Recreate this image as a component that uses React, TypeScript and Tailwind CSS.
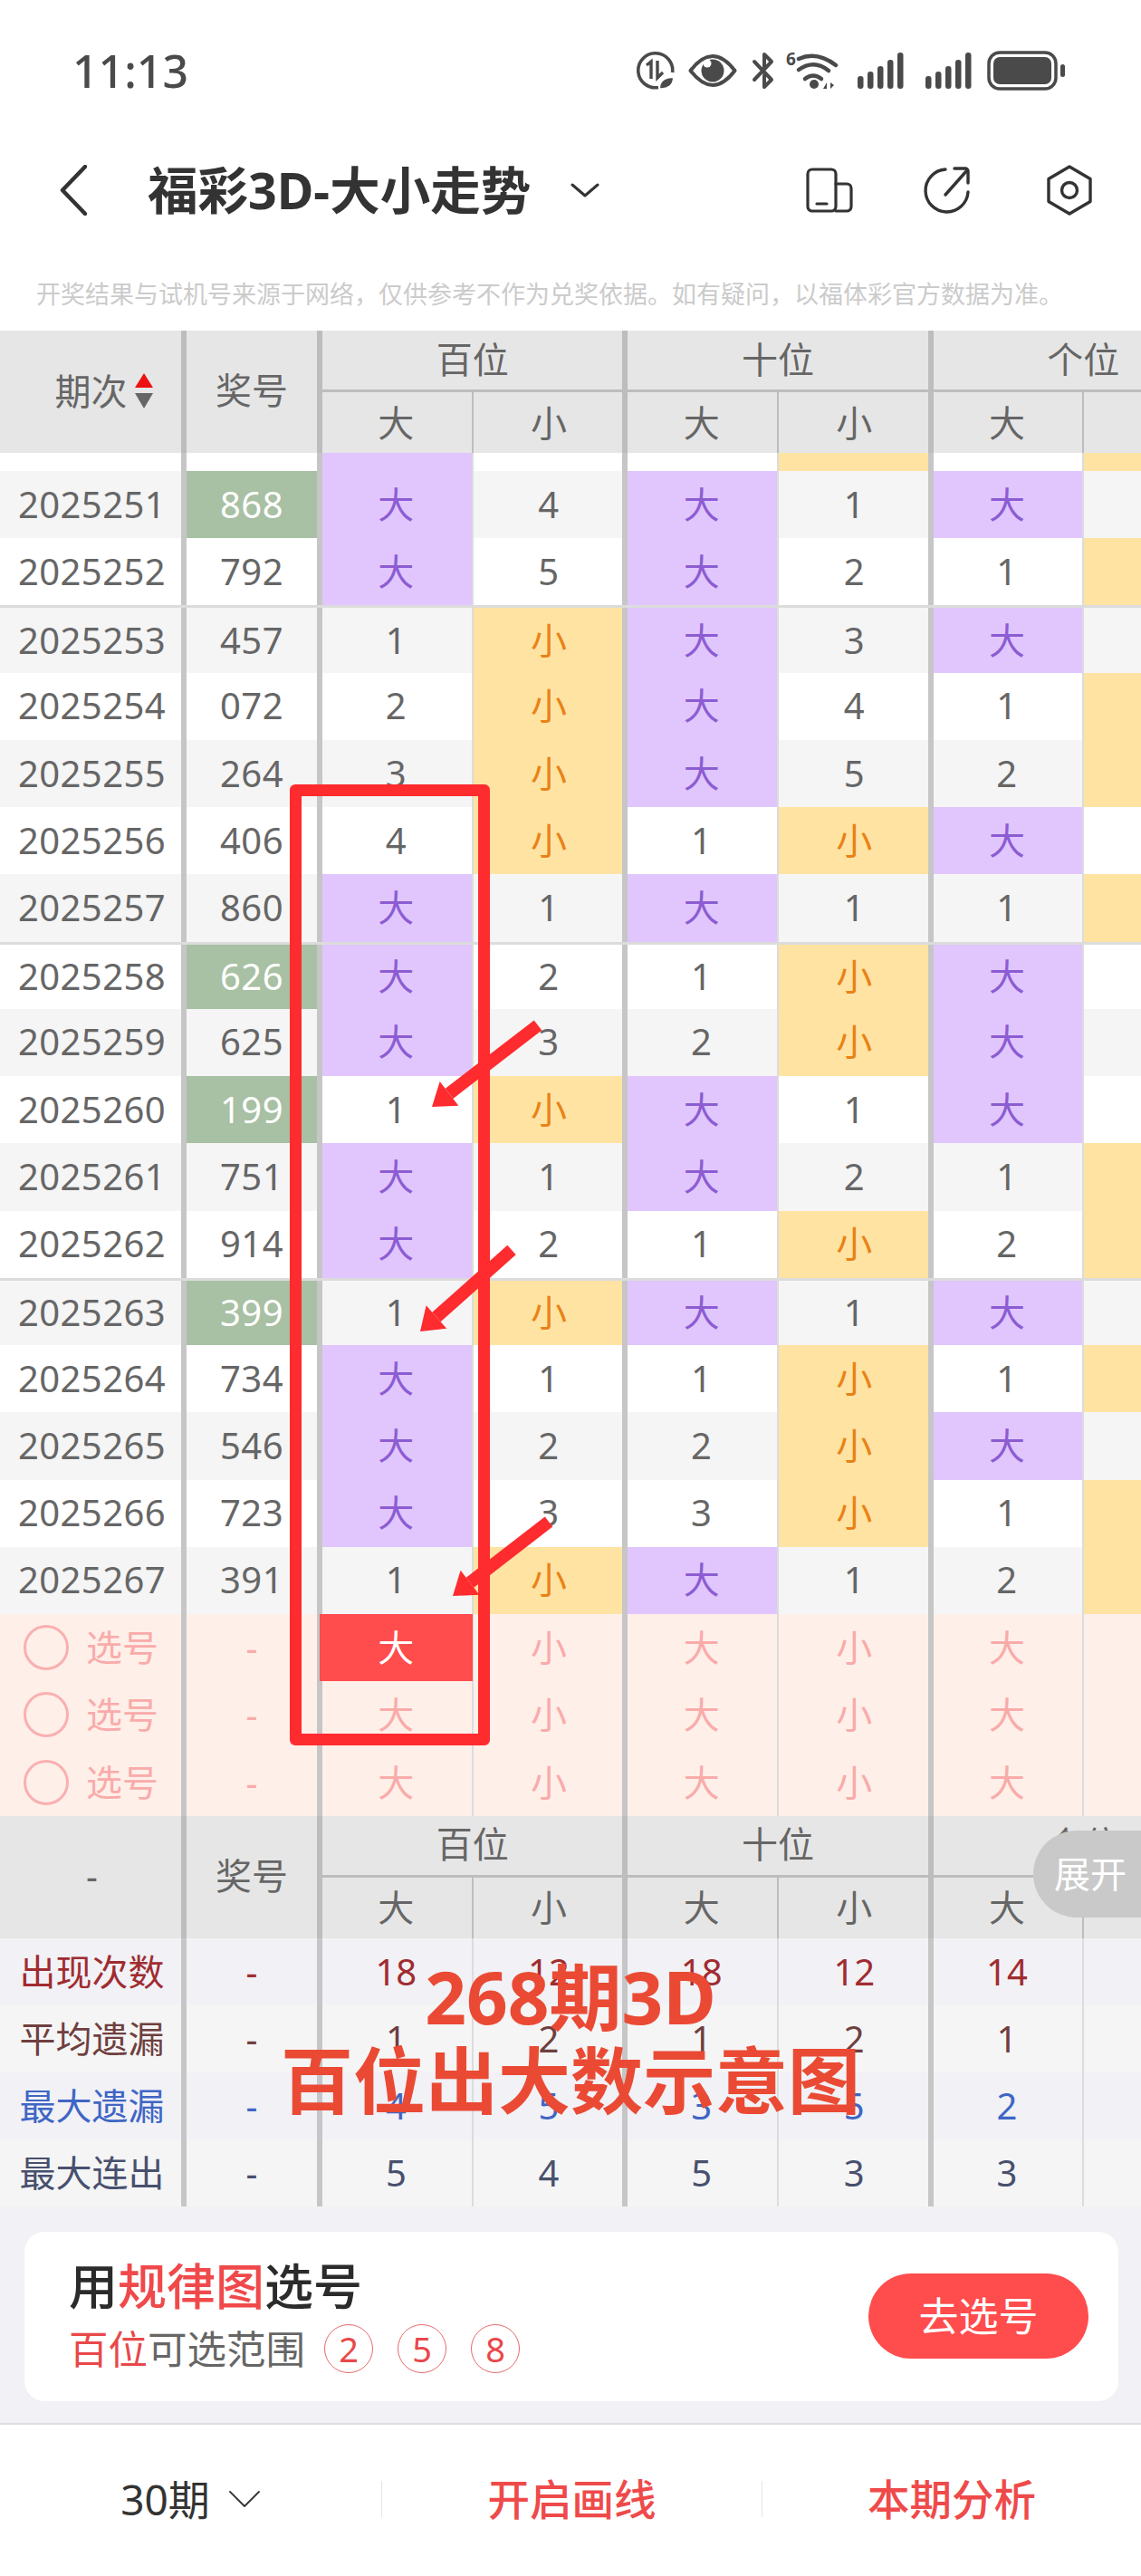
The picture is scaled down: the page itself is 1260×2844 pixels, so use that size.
import React from 'react'

const GRID = 'grid grid-cols-[203px_150px_repeat(6,168.67px)]'

// shadows keep the text centred on the cell while drawing the column rules
const BODY_RULES = [
  'shadow-[inset_-3px_0_0_#c6c6c6]',
  'shadow-[inset_3px_0_0_#c6c6c6,inset_-3px_0_0_#c6c6c6]',
  'shadow-[inset_3px_0_0_#c6c6c6,inset_-1px_0_0_#dcdcdc]',
  'shadow-[inset_1px_0_0_#dcdcdc,inset_-3px_0_0_#c6c6c6]',
  'shadow-[inset_3px_0_0_#c6c6c6,inset_-1px_0_0_#dcdcdc]',
  'shadow-[inset_1px_0_0_#dcdcdc,inset_-3px_0_0_#c6c6c6]',
  'shadow-[inset_3px_0_0_#c6c6c6,inset_-1px_0_0_#dcdcdc]',
  'shadow-[inset_1px_0_0_#dcdcdc,inset_-3px_0_0_#c6c6c6]',
]

const rows: [string, string, boolean, string[]][] = [
  ['2025251', '868', true, ['大', '4', '大', '1', '大', '1']],
  ['2025252', '792', false, ['大', '5', '大', '2', '1', '小']],
  ['2025253', '457', false, ['1', '小', '大', '3', '大', '1']],
  ['2025254', '072', false, ['2', '小', '大', '4', '1', '小']],
  ['2025255', '264', false, ['3', '小', '大', '5', '2', '小']],
  ['2025256', '406', false, ['4', '小', '1', '小', '大', '1']],
  ['2025257', '860', false, ['大', '1', '大', '1', '1', '小']],
  ['2025258', '626', true, ['大', '2', '1', '小', '大', '1']],
  ['2025259', '625', false, ['大', '3', '2', '小', '大', '2']],
  ['2025260', '199', true, ['1', '小', '大', '1', '大', '3']],
  ['2025261', '751', false, ['大', '1', '大', '2', '1', '小']],
  ['2025262', '914', false, ['大', '2', '1', '小', '2', '小']],
  ['2025263', '399', true, ['1', '小', '大', '1', '大', '1']],
  ['2025264', '734', false, ['大', '1', '1', '小', '1', '小']],
  ['2025265', '546', false, ['大', '2', '2', '小', '大', '1']],
  ['2025266', '723', false, ['大', '3', '3', '小', '1', '小']],
  ['2025267', '391', false, ['1', '小', '大', '1', '2', '小']],
]

const stats = [
  { label: '出现次数', bg: 'bg-[#f1f1f6]', text: 'text-[#a02c30]', values: ['18', '12', '18', '12', '14', '16'] },
  { label: '平均遗漏', bg: 'bg-[#f5f5f5]', text: 'text-[#6f3f3f]', values: ['1', '2', '1', '2', '1', '1'] },
  { label: '最大遗漏', bg: 'bg-[#f1f1f6]', text: 'text-[#3f66c4]', values: ['4', '5', '3', '5', '2', '3'] },
  { label: '最大连出', bg: 'bg-[#f5f5f5]', text: 'text-[#48506e]', values: ['5', '4', '5', '3', '3', '2'] },
]

const arrows = [
  [594, 1132, 477, 1222],
  [565, 1380, 464, 1470],
  [606, 1680, 500, 1762],
]

const headerRule = 'shadow-[inset_3px_0_0_#bdbdbd,inset_-3px_0_0_#bdbdbd]'
const headerRuleLast = 'shadow-[inset_3px_0_0_#bdbdbd,inset_-3px_0_0_#bdbdbd,inset_0_-3px_0_#bdbdbd]'

function TableHeader({ first }: { first: React.ReactNode }) {
  return (
    <div className={`${GRID} h-[135px] grid-rows-[68px_67px] bg-[#e6e6e6] text-[#666]`}>
      <div className="row-span-2 flex items-center justify-center pb-[2px] shadow-[inset_-3px_0_0_#bdbdbd]">{first}</div>
      <div className={`row-span-2 flex items-center justify-center pb-[3px] ${headerRule}`}>奖号</div>
      {['百位', '十位', '个位'].map((t) => (
        <div key={t} className={`col-span-2 flex items-center justify-center pb-[5px] ${headerRuleLast}`}>
          {t}
        </div>
      ))}
      {['大', '小', '大', '小', '大', '小'].map((t, i) => (
        <div
          key={i}
          className={`flex items-center justify-center ${
            i % 2 === 0
              ? 'shadow-[inset_3px_0_0_#bdbdbd,inset_-1px_0_0_#bdbdbd]'
              : 'shadow-[inset_1px_0_0_#bdbdbd,inset_-3px_0_0_#bdbdbd]'
          }`}
        >
          {t}
        </div>
      ))}
    </div>
  )
}

function Cell({ value, index }: { value: string; index: number }) {
  let color = 'text-[#666] tracking-[0.4px]'
  if (value === '大') color = 'bg-[#e0c6fd] text-[#8c5cd2]'
  if (value === '小') color = 'bg-[#ffe3a3] text-[#e98216]'
  return <div className={`flex items-center justify-center pb-[1px] ${color} ${BODY_RULES[index + 2]}`}>{value}</div>
}

function StatusIcons() {
  return (
    <div className="flex items-center text-[#4a4a4a]">
      <svg width="42" height="42" viewBox="0 0 42 42" fill="none" stroke="currentColor" strokeWidth="3.6">
        <path d="M24 39.5A19 19 0 1 1 39.6 23" />
        <path d="M11 15l5-4v19" strokeWidth="3.4" />
        <path d="M23 10v19l6-6" strokeWidth="3.4" />
        <path d="M25 41c0-9 6-13 16-13 0 9-6 14-16 13z" fill="currentColor" stroke="#fff" strokeWidth="2" />
      </svg>
      <svg className="ml-[15px]" width="54" height="36" viewBox="0 0 54 36" fill="none">
        <path d="M2.5 18Q27-14 51.500 18 27 50 2.500 18z" stroke="currentColor" strokeWidth="4" strokeLinejoin="round" />
        <circle cx="27" cy="18" r="12.500" fill="currentColor" />
        <circle cx="21" cy="10" r="4.500" fill="#fff" />
      </svg>
      <svg className="ml-[16px]" width="26" height="42" viewBox="0 0 26 42" fill="none" stroke="currentColor" strokeWidth="4" strokeLinecap="round" strokeLinejoin="round">
        <path d="M3 11l19 20-8 8V26M14 17V3l8 8L3 31" />
      </svg>
      <div className="relative ml-[12px] h-[44px] w-[58px]">
        <span className="absolute left-0 top-[-3px] text-[19px] leading-[24px] font-bold">6</span>
        <svg className="absolute left-0 top-0" width="58" height="44" viewBox="0 0 58 44" fill="none" stroke="currentColor" strokeWidth="4.500" strokeLinecap="round">
          <path d="M14 9Q34 0 55 16" />
          <path d="M14 21Q31 9 47 22" />
          <path d="M21 31Q30 24 39 31" />
          <circle cx="31" cy="37" r="5" fill="currentColor" stroke="none" />
          <path d="M41 42l4-7v7zM49 35v7l4-4z" fill="currentColor" stroke="none" />
        </svg>
      </div>
      {[0, 1].map((k) => (
        <svg key={k} className={k ? 'ml-[24px]' : 'ml-[21px]'} width="51" height="40" viewBox="0 0 51 40" fill="currentColor">
          <rect x="0" y="26" width="6.500" height="14" rx="3" />
          <rect x="11" y="21" width="6.500" height="19" rx="3" />
          <rect x="22" y="15" width="6.500" height="25" rx="3" />
          <rect x="33" y="8" width="6.500" height="32" rx="3" />
          <rect x="44" y="0" width="6.500" height="40" rx="3" />
        </svg>
      ))}
      <svg className="ml-[17px]" width="86" height="44" viewBox="0 0 86 44" fill="currentColor">
        <rect x="2" y="2" width="74" height="40" rx="12" fill="none" stroke="currentColor" strokeWidth="3.500" />
        <rect x="7" y="7" width="64" height="30" rx="7" />
        <rect x="81" y="15" width="5" height="14" rx="2.500" />
      </svg>
    </div>
  )
}

export default function App() {
  return (
    <div className="relative h-[2844px] w-[1260px] overflow-hidden bg-white font-['Noto_Sans','Noto_Sans_CJK_SC',sans-serif] text-[40px] leading-none">
      {/* status bar */}
      <div className="flex h-[140px] items-start justify-between pl-[80px] pr-[84px] pt-[56px]">
        <span className="text-[50px] leading-[44px] font-medium text-[#4a4a4a]">11:13</span>
        <StatusIcons />
      </div>

      {/* nav */}
      <div className="flex h-[140px] items-center text-[#333]">
        <svg className="ml-[66px]" width="30" height="56" viewBox="0 0 30 56" fill="none" stroke="currentColor" strokeWidth="4.500" strokeLinecap="round" strokeLinejoin="round">
          <path d="M28 2L3 28l25 26" />
        </svg>
        <h1 className="ml-[67px] w-[419px] whitespace-nowrap text-[55.500px] font-bold">福彩3D-大小走势</h1>
        <svg className="ml-[48px]" width="32" height="16" viewBox="0 0 32 16" fill="none" stroke="currentColor" strokeWidth="3" strokeLinecap="round" strokeLinejoin="round">
          <path d="M2 2l14 12L30 2" />
        </svg>
        <svg className="ml-[228px]" width="52" height="50" viewBox="0 0 52 50" fill="none" stroke="currentColor" strokeWidth="3.200" strokeLinecap="round" strokeLinejoin="round">
          <rect x="2" y="2" width="31" height="46" rx="5" />
          <path d="M33 18h12a5 5 0 0 1 5 5v20a5 5 0 0 1-5 5H33" />
          <path d="M12 40h11" />
        </svg>
        <svg className="ml-[77px]" width="52" height="52" viewBox="0 0 52 52" fill="none" stroke="currentColor" strokeWidth="3.400" strokeLinecap="round" strokeLinejoin="round">
          <path d="M25 3A23.500 23.500 0 1 0 50 28" />
          <path d="M25 31L49 4" />
          <path d="M35 2h12a3 3 0 0 1 3 3v13" />
        </svg>
        <svg className="ml-[84px]" width="52" height="56" viewBox="0 0 52 56" fill="none" stroke="currentColor" strokeWidth="3.400" strokeLinejoin="round">
          <path d="M26 2l23 13.500v25L26 54 3 40.500v-25z" />
          <circle cx="26" cy="28" r="8.500" />
        </svg>
      </div>

      {/* disclaimer */}
      <p className="h-[85px] whitespace-nowrap pl-[40px] pt-[30px] text-[27px] leading-[30px] text-[#cbcbcb]">
        开奖结果与试机号来源于网络，仅供参考不作为兑奖依据。如有疑问，以福体彩官方数据为准。
      </p>

      <TableHeader
        first={
          <span className="flex items-center pl-[26px]">
            期次
            <span className="ml-[8px] flex flex-col gap-[6px]">
              <span className="h-0 w-0 border-x-[10px] border-b-[16px] border-x-transparent border-b-[#ee1111]" />
              <span className="h-0 w-0 border-x-[10px] border-t-[17px] border-x-transparent border-t-[#666]" />
            </span>
          </span>
        }
      />

      {/* sliver of the row scrolled under the header */}
      <div className={`${GRID} h-[20px] bg-white`}>
        {['', '', '大', '', '', '小', '', '小'].map((v, i) => (
          <div
            key={i}
            className={`${BODY_RULES[i]} ${v === '大' ? 'bg-[#e0c6fd]' : ''} ${v === '小' ? 'bg-[#ffe3a3]' : ''}`}
          />
        ))}
      </div>

      {rows.map(([period, num, hot, cells], r) => (
        <div
          key={period}
          className={`${GRID} h-[74.24px] ${r % 2 === 0 ? 'bg-[#f5f5f5]' : 'bg-white'} ${
            r === 2 || r === 7 || r === 12 ? 'border-t-[3px] border-[#dcdcdc]' : ''
          }`}
        >
          <div className={`flex items-center justify-center pb-[1px] tracking-[0.4px] text-[#666] ${BODY_RULES[0]}`}>{period}</div>
          <div
            className={`flex items-center justify-center pb-[1px] tracking-[0.4px] ${BODY_RULES[1]} ${
              hot ? 'bg-[#a8c0a3] text-white' : 'text-[#666]'
            }`}
          >
            {num}
          </div>
          {cells.map((c, i) => (
            <Cell key={i} value={c} index={i} />
          ))}
        </div>
      ))}

      {/* pick rows */}
      {[0, 1, 2].map((r) => (
        <div key={r} className={`${GRID} h-[74.33px] bg-[#ffefe9] text-[#f9abaa]`}>
          <div className={`flex items-center pl-[26px] ${BODY_RULES[0]}`}>
            <span className="h-[50px] w-[50px] rounded-full border-[3px] border-[#f9b0b0]" />
            <span className="ml-[19px] text-[40px]">选号</span>
          </div>
          <div className={`flex items-center justify-center ${BODY_RULES[1]}`}>-</div>
          {['大', '小', '大', '小', '大', '小'].map((t, i) => (
            <div
              key={i}
              className={`flex items-center justify-center ${BODY_RULES[i + 2]} ${
                r === 0 && i === 0 ? 'bg-[#ff4c4d] text-white shadow-none' : ''
              }`}
            >
              {t}
            </div>
          ))}
        </div>
      ))}

      <TableHeader first="-" />

      {stats.map((row) => (
        <div key={row.label} className={`${GRID} h-[74px] ${row.bg} ${row.text}`}>
          <div className={`flex items-center justify-center ${BODY_RULES[0]}`}>{row.label}</div>
          <div className={`flex items-center justify-center ${BODY_RULES[1]}`}>-</div>
          {row.values.map((v, i) => (
            <div key={i} className={`flex items-center justify-center ${BODY_RULES[i + 2]}`}>
              {v}
            </div>
          ))}
        </div>
      ))}

      {/* pattern card */}
      <div className="h-[241px] border-b-[2px] border-[#dddddd] bg-[#f1f1f6] px-[27px] pt-[28px]">
        <div className="flex h-[187px] w-[1208px] items-center justify-between rounded-[22px] bg-white pl-[49px] pr-[33px]">
          <div>
            <div className="text-[54px] leading-[60px] font-medium text-[#2b2b2b]">
              用<span className="text-[#f0494b]">规律图</span>选号
            </div>
            <div className="mt-[12px] flex items-center text-[43.500px] text-[#666]">
              <span className="text-[#e9484a]">百位</span>可选范围
              <span className="ml-[21px] flex gap-[27px]">
                {['2', '5', '8'].map((n) => (
                  <span
                    key={n}
                    className="flex h-[54px] w-[54px] items-center justify-center rounded-full border-[1.5px] border-[#e66a6a] text-[38px] text-[#e9484a]"
                  >
                    {n}
                  </span>
                ))}
              </span>
            </div>
          </div>
          <button className="flex h-[94px] w-[243px] items-center justify-center rounded-full bg-[#ff4c4d] text-[44px] text-white">
            去选号
          </button>
        </div>
      </div>

      {/* bottom bar */}
      <div className="flex h-[165px] items-center">
        <div className="flex h-[40px] w-[422px] items-center justify-center border-r border-[#e6e6e6] text-[46px] text-[#333]">
          30期
          <svg className="ml-[20px]" width="36" height="20" viewBox="0 0 36 20" fill="none" stroke="currentColor" strokeWidth="1.800" strokeLinecap="round" strokeLinejoin="round">
            <path d="M2 2l16 16L34 2" />
          </svg>
        </div>
        <div className="flex h-[40px] w-[420px] items-center justify-center border-r border-[#e6e6e6] text-[46.500px] font-medium text-[#ef4a4a]">
          开启画线
        </div>
        <div className="flex h-[40px] w-[418px] items-center justify-center text-[46.500px] font-medium text-[#ef4a4a]">
          本期分析
        </div>
      </div>

      {/* expand tab, over the lower header */}
      <div className="absolute left-[1141px] top-[2021px] flex h-[96px] w-[119px] items-center justify-end rounded-l-[48px] bg-[#c9c9c9] pr-[16px] text-[40px] text-white">
        展开
      </div>

      {/* hand-drawn annotation */}
      <div className="absolute left-[320px] top-[866px] h-[1061px] w-[221px] rounded-[6px] border-[13px] border-[#fe2b2f]" />
      <svg className="absolute left-0 top-0" width="1260" height="2844" fill="#fe2b2f">
        {arrows.map(([sx, sy, tx, ty]) => {
          const len = Math.hypot(tx - sx, ty - sy)
          const ux = (tx - sx) / len
          const uy = (ty - sy) / len
          const bx = tx - ux * 24
          const by = ty - uy * 24
          return (
            <g key={sy}>
              <line x1={sx} y1={sy} x2={bx} y2={by} stroke="#fe2b2f" strokeWidth="14" />
              <polygon points={`${tx},${ty} ${bx - uy * 17},${by + ux * 17} ${bx + uy * 17},${by - ux * 17}`} />
            </g>
          )
        })}
      </svg>
      <div className="absolute left-0 top-[2158px] w-full text-center text-[80px] leading-[92px] font-bold text-[#ea4a34]">
        268期3D
        <br />
        百位出大数示意图
      </div>
    </div>
  )
}
